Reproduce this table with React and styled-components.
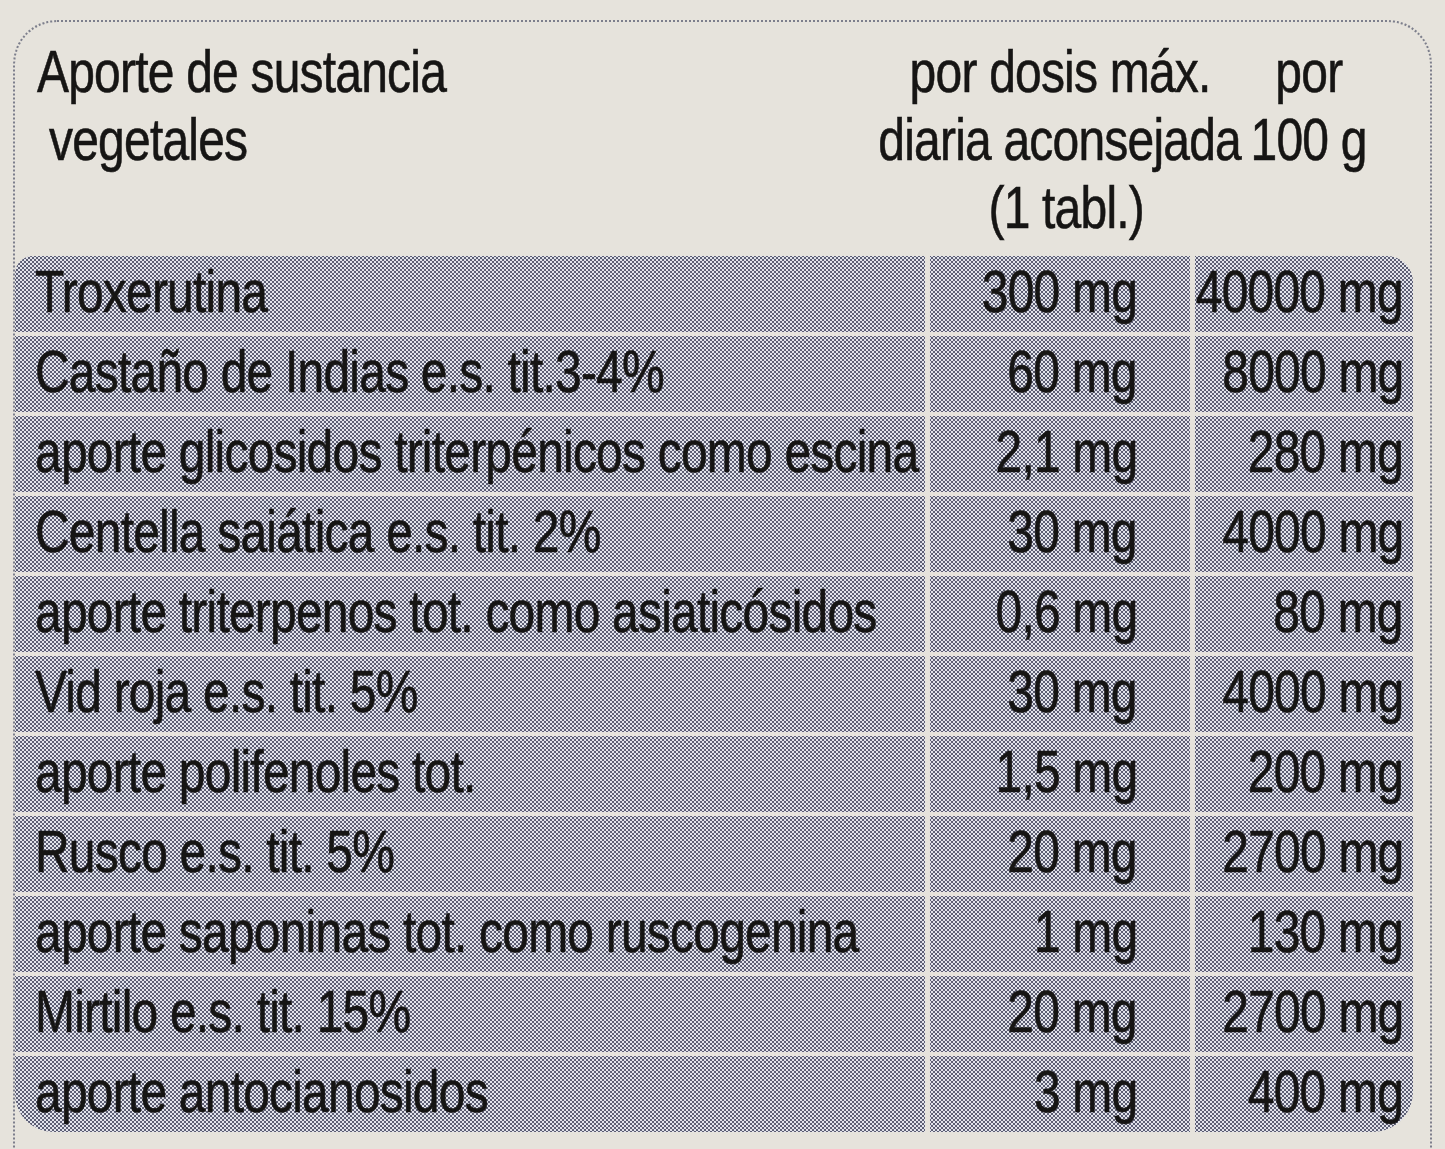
import React from "react";
import styled, { createGlobalStyle } from "styled-components";

const GlobalStyle = createGlobalStyle`
  html, body {
    margin: 0;
    padding: 0;
    background: #e6e3dc;
  }
  body {
    font-family: "Liberation Sans", Arial, sans-serif;
    color: #161514;
  }
`;

const Page = styled.div`
  width: 1445px;
  height: 1149px;
  overflow: hidden;
  padding: 20px 0 0 13px;
  box-sizing: border-box;
`;

const Frame = styled.div`
  width: 1419px;
  height: 1200px;
  box-sizing: border-box;
  border: 2px dotted #7d7f8c;
  border-bottom: none;
  border-radius: 44px 44px 0 0;
`;

const Header = styled.div`
  display: grid;
  grid-template-columns: 910px 260px 228px;
  column-gap: 5px;
  padding-top: 16px;
  height: 218px;
  font-size: 60px;
  line-height: 68px;
`;

const HeadCell = styled.div`
  display: flex;
  flex-direction: column;
  align-items: ${(p) => (p.$left ? "flex-start" : "center")};
  padding-left: ${(p) => (p.$left ? "22px" : "0")};
  white-space: nowrap;
`;

// the print uses a condensed face; squeeze the regular one
const Text = styled.span`
  display: inline-block;
  white-space: nowrap;
  letter-spacing: -1px;
  transform: scaleX(0.8);
  transform-origin: ${(p) => p.$origin || "left"} center;
  margin-left: ${(p) => p.$indent || 0}px;
  -webkit-text-stroke: 0.6px #161514;
`;

const Table = styled.div`
  display: grid;
  grid-template-columns: 910px 260px 218px;
  grid-auto-rows: 76px;
  column-gap: 5px;
  row-gap: 4px;
  width: 1398px;
  border-radius: 18px 26px 40px 38px;
  overflow: hidden;
`;

const Cell = styled.div`
  display: flex;
  align-items: center;
  justify-content: ${(p) => (p.$right ? "flex-end" : "flex-start")};
  padding: 0 ${(p) => p.$pr || 0}px 6px ${(p) => p.$pl || 0}px;
  font-size: 60px;
  background-color: #e2e3eb;
  background-image: radial-gradient(circle, #44465e 0.6px, transparent 1.3px),
    radial-gradient(circle, #44465e 0.6px, transparent 1.3px);
  background-size: 4px 4px;
  background-position: 0 0, 2px 2px;
`;

const rows = [
  ["Troxerutina", "300 mg", "40000 mg"],
  ["Castaño de Indias e.s. tit.3-4%", "60 mg", "8000 mg"],
  ["aporte glicosidos triterpénicos como escina", "2,1 mg", "280 mg"],
  ["Centella saiática e.s. tit. 2%", "30 mg", "4000 mg"],
  ["aporte triterpenos tot. como asiaticósidos", "0,6 mg", "80 mg"],
  ["Vid roja e.s. tit. 5%", "30 mg", "4000 mg"],
  ["aporte polifenoles tot.", "1,5 mg", "200 mg"],
  ["Rusco e.s. tit. 5%", "20 mg", "2700 mg"],
  ["aporte saponinas tot. como ruscogenina", "1 mg", "130 mg"],
  ["Mirtilo e.s. tit. 15%", "20 mg", "2700 mg"],
  ["aporte antocianosidos", "3 mg", "400 mg"],
];

export default function App() {
  return (
    <Page>
      <GlobalStyle />
      <Frame>
        <Header>
          <HeadCell $left>
            <Text>Aporte de sustancia</Text>
            <Text $indent={12}>vegetales</Text>
          </HeadCell>
          <HeadCell>
            <Text $origin="center">por dosis máx.</Text>
            <Text $origin="center">diaria aconsejada</Text>
            <Text $origin="center" $indent={12}>(1 tabl.)</Text>
          </HeadCell>
          <HeadCell>
            <Text $origin="center">por</Text>
            <Text $origin="center">100 g</Text>
          </HeadCell>
        </Header>
        <Table>
          {rows.map(([name, dose, per100]) => (
            <React.Fragment key={name}>
              <Cell $pl={20}>
                <Text>{name}</Text>
              </Cell>
              <Cell $right $pr={53}>
                <Text $origin="right">{dose}</Text>
              </Cell>
              <Cell $right $pr={10}>
                <Text $origin="right">{per100}</Text>
              </Cell>
            </React.Fragment>
          ))}
        </Table>
      </Frame>
    </Page>
  );
}
